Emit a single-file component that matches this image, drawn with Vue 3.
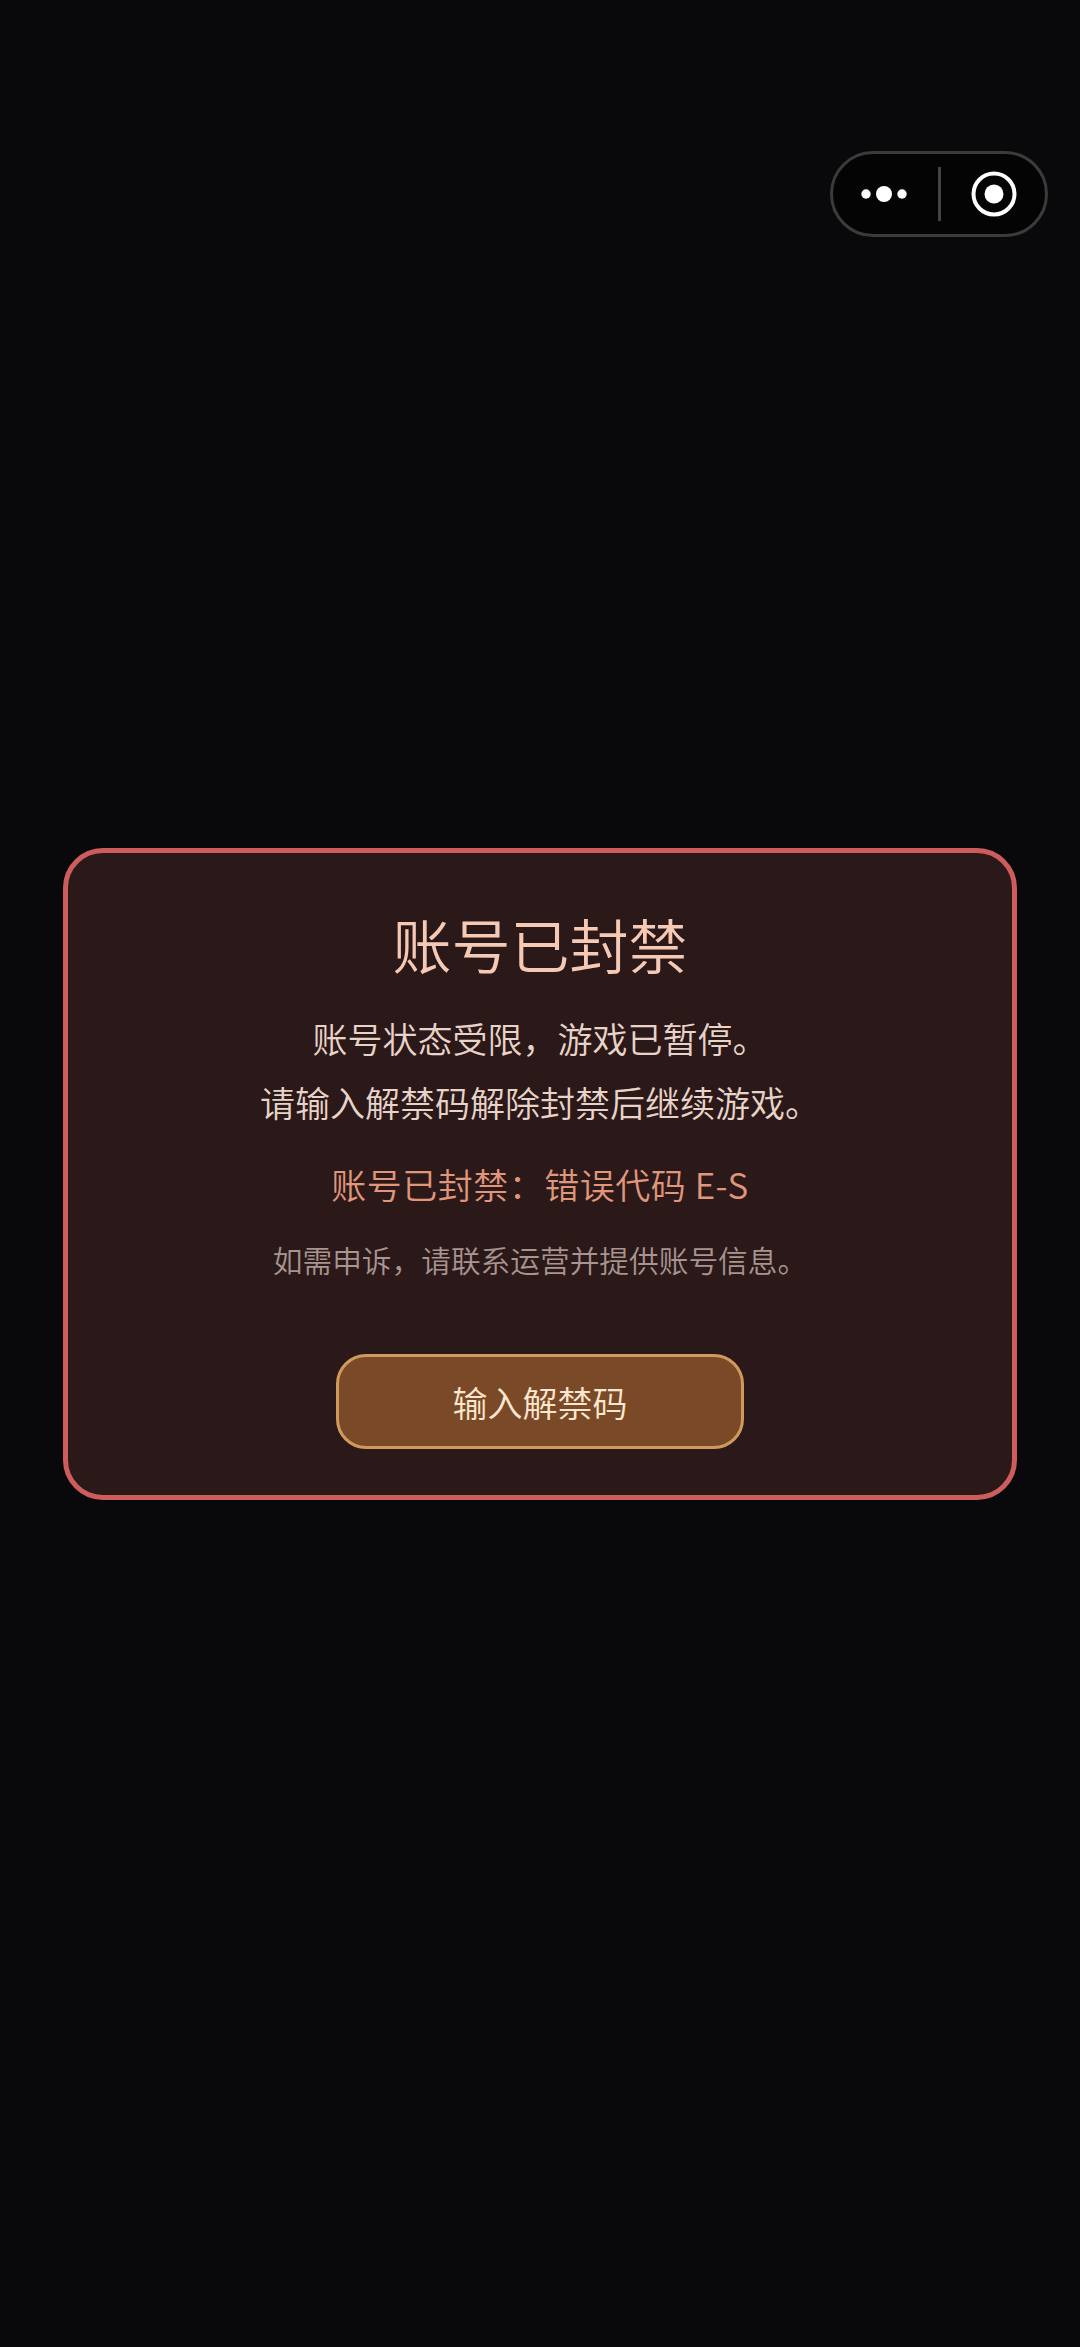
<script setup>
const lines = ['账号状态受限，游戏已暂停。', '请输入解禁码解除封禁后继续游戏。']
</script>

<template>
  <main class="page">
    <div class="capsule">
      <div class="capsule-half more-half">
        <svg class="more" width="60" height="24" viewBox="0 0 60 24" aria-hidden="true">
          <circle cx="12" cy="12" r="4.7" fill="#fff" />
          <circle cx="30" cy="12" r="8" fill="#fff" />
          <circle cx="48" cy="12" r="4.7" fill="#fff" />
        </svg>
      </div>
      <span class="divider"></span>
      <div class="capsule-half close-half">
        <svg class="close" width="48" height="48" viewBox="0 0 48 48" aria-hidden="true">
          <circle cx="24" cy="24" r="20.5" fill="none" stroke="#fff" stroke-width="4" />
          <circle cx="24" cy="24" r="9.5" fill="#fff" />
        </svg>
      </div>
    </div>

    <section class="card">
      <h1 class="title">账号已封禁</h1>
      <p v-for="line in lines" :key="line" class="body">{{ line }}</p>
      <p class="code">账号已封禁：错误代码 E-S</p>
      <p class="hint">如需申诉，请联系运营并提供账号信息。</p>
      <button class="action" type="button">输入解禁码</button>
    </section>
  </main>
</template>

<style>
html, body { margin: 0; background: #09080b; }
</style>

<style scoped>
.page {
  position: relative;
  box-sizing: border-box;
  height: 2347px;
  display: flex;
  align-items: center;
  justify-content: center;
  background: #09080b;
  font-family: "Noto Sans CJK SC", "Noto Sans", sans-serif;
  font-weight: 350;
}
.capsule {
  position: absolute;
  top: 151px;
  left: 830px;
  box-sizing: border-box;
  width: 218px;
  height: 86px;
  display: flex;
  align-items: center;
  border: 3px solid #3b3b3c;
  border-radius: 43px;
  background: #040405;
}
.capsule-half {
  flex: 1;
  display: flex;
  align-items: center;
  justify-content: center;
}
.more-half { padding-right: 2px; }
.close-half { padding-left: 2px; }
.divider {
  width: 3px;
  height: 54px;
  background: #444;
}
.more, .close { display: block; }
.card {
  box-sizing: border-box;
  width: 954px;
  height: 652px;
  display: flex;
  flex-direction: column;
  align-items: center;
  padding-top: 51px;
  border: 5px solid #cd5c5c;
  border-radius: 40px;
  background: #2b1919;
}
.title, .body, .code, .hint { margin: 0; text-align: center; }
.title {
  font-size: 59px;
  font-weight: 350;
  line-height: 80px;
  color: #f6c9b5;
}
.body {
  font-size: 35px;
  line-height: 64px;
  color: #e8d3c9;
}
.title + .body { margin-top: 22px; }
.code {
  margin-top: 18px;
  font-size: 35px;
  letter-spacing: 0.5px;
  line-height: 64px;
  color: #e0967a;
}
.hint {
  margin-top: 19px;
  font-size: 29.7px;
  line-height: 50px;
  color: #a89490;
}
.action {
  margin-top: 69px;
  box-sizing: border-box;
  width: 408px;
  height: 95px;
  border: 3px solid #cf9a5c;
  border-radius: 30px;
  background: #7a4a28;
  color: #fde8cf;
  font-family: inherit;
  font-weight: 350;
  font-size: 35px;
  padding: 0;
}
</style>
